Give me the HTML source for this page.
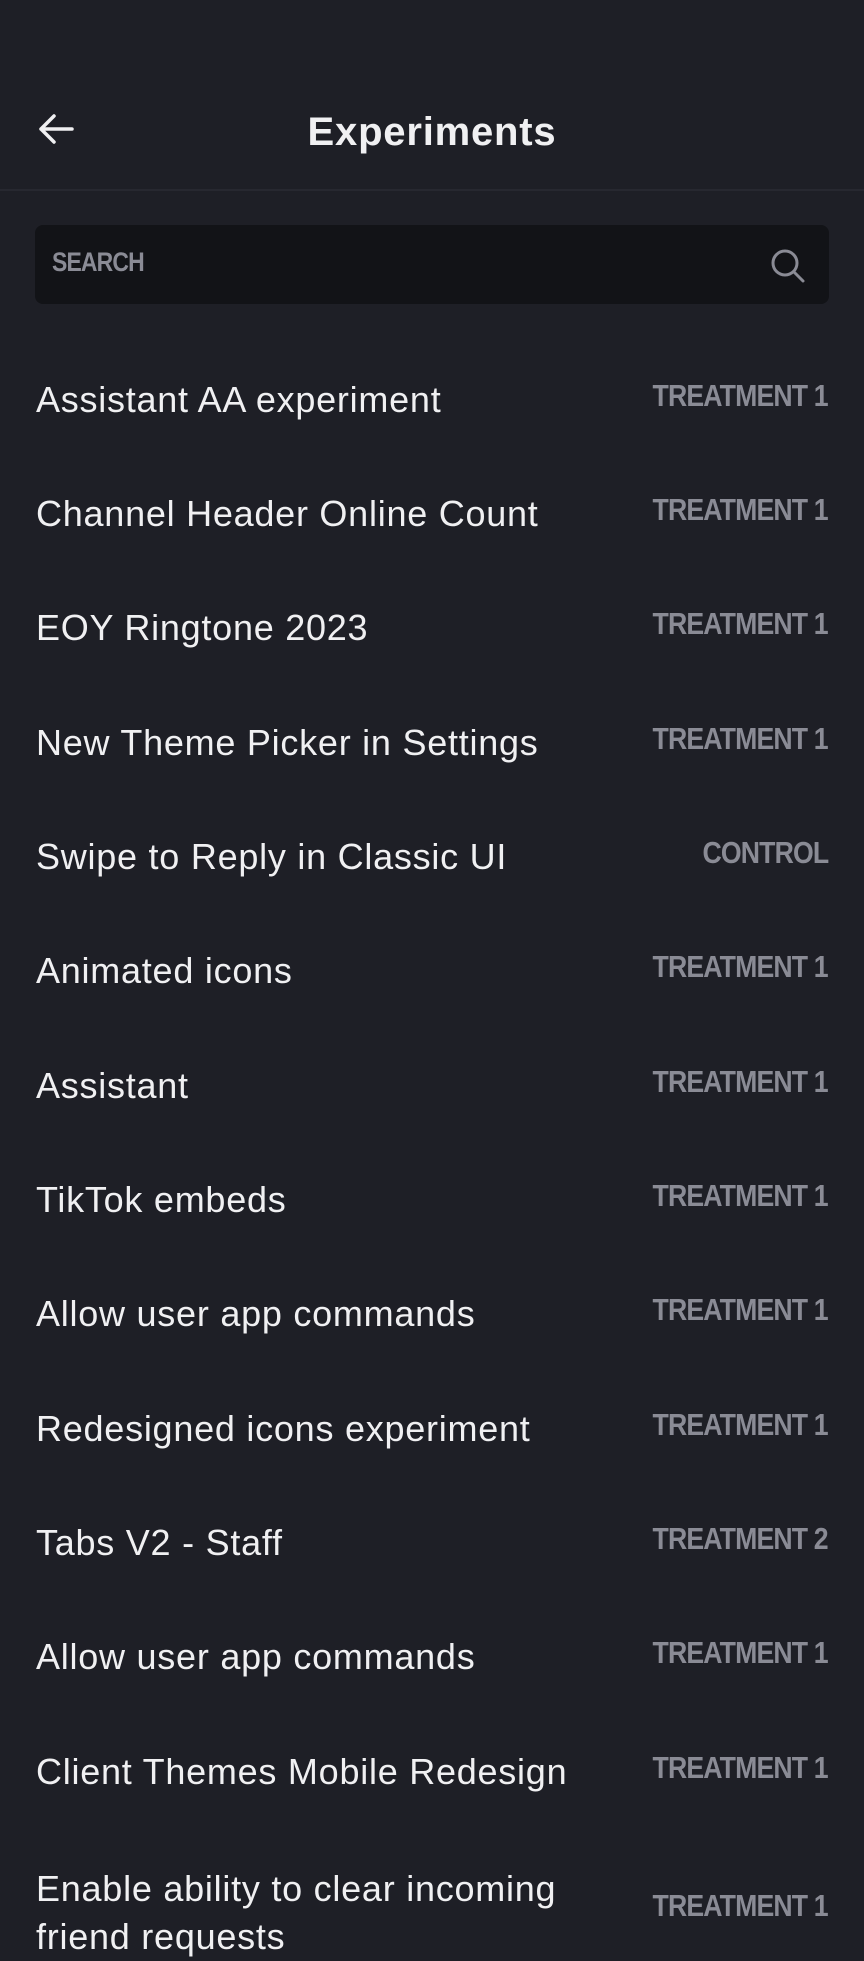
<!DOCTYPE html>
<html><head><meta charset="utf-8"><style>
body{margin:0;width:864px;height:1920px;overflow:hidden;background:#1e1f26;font-family:"Liberation Sans",sans-serif;color:#f0f0f2;position:relative}
.title{position:absolute;top:109px;left:0;width:864px;text-align:center;font-weight:bold;font-size:40px;line-height:46px;letter-spacing:.8px}
.div{position:absolute;top:189px;left:0;width:864px;height:2px;background:#272830}
.search{position:absolute;left:35px;top:225px;width:794px;height:79px;background:#121317;border-radius:8px}
.search span{position:absolute;left:17px;top:22px;font-weight:bold;font-size:27px;color:#8a8b95;transform:scaleX(.85);transform-origin:left;letter-spacing:-1px}
.row{position:absolute;left:36px;font-size:36px;line-height:42px;width:560px;letter-spacing:.75px}
.badge{position:absolute;right:36px;font-weight:bold;font-size:31px;color:#8a8b95;transform:scaleX(.86);transform-origin:right;letter-spacing:-1px}
</style></head><body>
<svg style="position:absolute;left:36px;top:110px" width="40" height="40" viewBox="0 0 40 40"><path d="M36 19H5M18 6L5 19l13 13" fill="none" stroke="#f0f0f2" stroke-width="3.5" stroke-linecap="round" stroke-linejoin="round"/></svg>
<div class="title">Experiments</div>
<div class="div"></div>
<div class="search"><span>SEARCH</span>
<svg style="position:absolute;right:22px;top:22px" width="38" height="38" viewBox="0 0 38 38"><circle cx="16" cy="16" r="12" fill="none" stroke="#8a8b95" stroke-width="3"/><path d="M25 25l9 9" stroke="#8a8b95" stroke-width="3" stroke-linecap="round"/></svg></div>
<div class="row" style="top:379px">Assistant AA experiment</div><div class="badge" style="top:378px">TREATMENT 1</div>
<div class="row" style="top:493px">Channel Header Online Count</div><div class="badge" style="top:492px">TREATMENT 1</div>
<div class="row" style="top:607px">EOY Ringtone 2023</div><div class="badge" style="top:606px">TREATMENT 1</div>
<div class="row" style="top:722px">New Theme Picker in Settings</div><div class="badge" style="top:721px">TREATMENT 1</div>
<div class="row" style="top:836px">Swipe to Reply in Classic UI</div><div class="badge" style="top:835px">CONTROL</div>
<div class="row" style="top:950px">Animated icons</div><div class="badge" style="top:949px">TREATMENT 1</div>
<div class="row" style="top:1065px">Assistant</div><div class="badge" style="top:1064px">TREATMENT 1</div>
<div class="row" style="top:1179px">TikTok embeds</div><div class="badge" style="top:1178px">TREATMENT 1</div>
<div class="row" style="top:1293px">Allow user app commands</div><div class="badge" style="top:1292px">TREATMENT 1</div>
<div class="row" style="top:1408px">Redesigned icons experiment</div><div class="badge" style="top:1407px">TREATMENT 1</div>
<div class="row" style="top:1522px">Tabs V2 - Staff</div><div class="badge" style="top:1521px">TREATMENT 2</div>
<div class="row" style="top:1636px">Allow user app commands</div><div class="badge" style="top:1635px">TREATMENT 1</div>
<div class="row" style="top:1751px">Client Themes Mobile Redesign</div><div class="badge" style="top:1750px">TREATMENT 1</div>
<div class="row" style="top:1865px;line-height:48px">Enable ability to clear incoming friend requests</div><div class="badge" style="top:1888px">TREATMENT 1</div>
</body></html>
